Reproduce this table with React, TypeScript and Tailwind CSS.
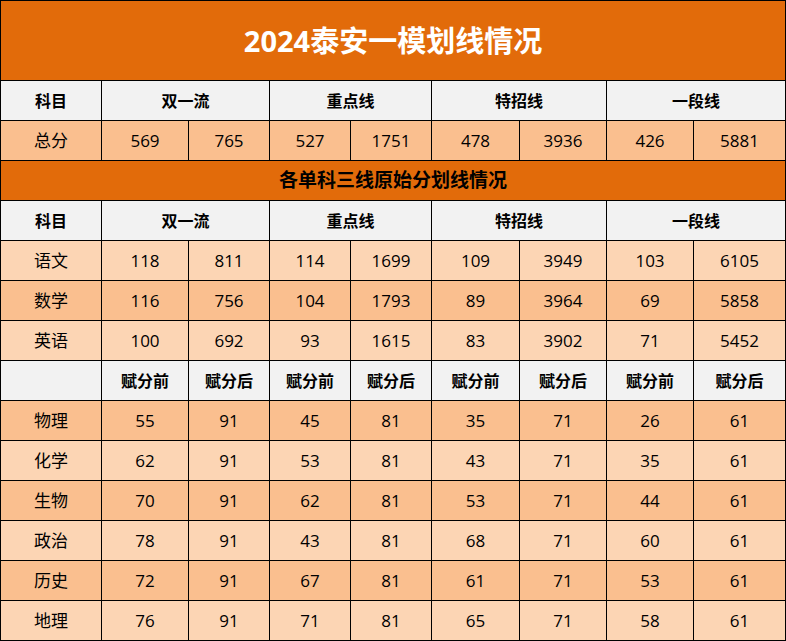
const font = "font-['Open_Sans','Noto_Sans_CJK_SC',sans-serif]"

const lines = ["双一流", "重点线", "特招线", "一段线"]

const rawRows: [string, number[]][] = [
  ["语文", [118, 811, 114, 1699, 109, 3949, 103, 6105]],
  ["数学", [116, 756, 104, 1793, 89, 3964, 69, 5858]],
  ["英语", [100, 692, 93, 1615, 83, 3902, 71, 5452]],
]

const subjectRows: [string, number[]][] = [
  ["物理", [55, 91, 45, 81, 35, 71, 26, 61]],
  ["化学", [62, 91, 53, 81, 43, 71, 35, 61]],
  ["生物", [70, 91, 62, 81, 53, 71, 44, 61]],
  ["政治", [78, 91, 43, 81, 68, 71, 60, 61]],
  ["历史", [72, 91, 67, 81, 61, 71, 53, 61]],
  ["地理", [76, 91, 71, 81, 65, 71, 58, 61]],
]

const cell = "flex items-center justify-center"

function HeaderRow() {
  return (
    <>
      <div className={`${cell} bg-[#f2f2f2] text-[16px] font-bold`}>科目</div>
      {lines.map((l) => (
        <div key={l} className={`${cell} col-span-2 bg-[#f2f2f2] text-[16px] font-bold`}>
          {l}
        </div>
      ))}
    </>
  )
}

function DataRow({ name, values, dark }: { name: string; values: number[]; dark: boolean }) {
  const bg = dark ? "bg-[#fabf8f]" : "bg-[#fcd5b4]"
  return (
    <>
      <div className={`${cell} ${bg} text-[17px]`}>{name}</div>
      {values.map((v, i) => (
        <div key={i} className={`${cell} ${bg} text-[17px]`}>
          {v}
        </div>
      ))}
    </>
  )
}

export default function App() {
  return (
    <div
      className={`${font} grid w-[786px] gap-px bg-black p-px text-black grid-cols-[100px_86px_80px_80px_80px_87px_86px_86px_91px] grid-rows-[79px_repeat(14,39px)]`}
    >
      <div className={`${cell} col-span-9 bg-[#e26b0a] text-[29px] font-bold text-white`}>
        2024泰安一模划线情况
      </div>

      <HeaderRow />
      <DataRow name="总分" values={[569, 765, 527, 1751, 478, 3936, 426, 5881]} dark />

      <div className={`${cell} col-span-9 bg-[#e26b0a] text-[19px] font-bold`}>
        各单科三线原始分划线情况
      </div>

      <HeaderRow />
      {rawRows.map(([name, values], i) => (
        <DataRow key={name} name={name} values={values} dark={i % 2 === 1} />
      ))}

      <div className="bg-[#f2f2f2]" />
      {lines.map((l) => (
        <div key={l} className="contents">
          <div className={`${cell} bg-[#f2f2f2] text-[16px] font-bold`}>赋分前</div>
          <div className={`${cell} bg-[#f2f2f2] text-[16px] font-bold`}>赋分后</div>
        </div>
      ))}

      {subjectRows.map(([name, values], i) => (
        <DataRow key={name} name={name} values={values} dark={i % 2 === 0} />
      ))}
    </div>
  )
}
